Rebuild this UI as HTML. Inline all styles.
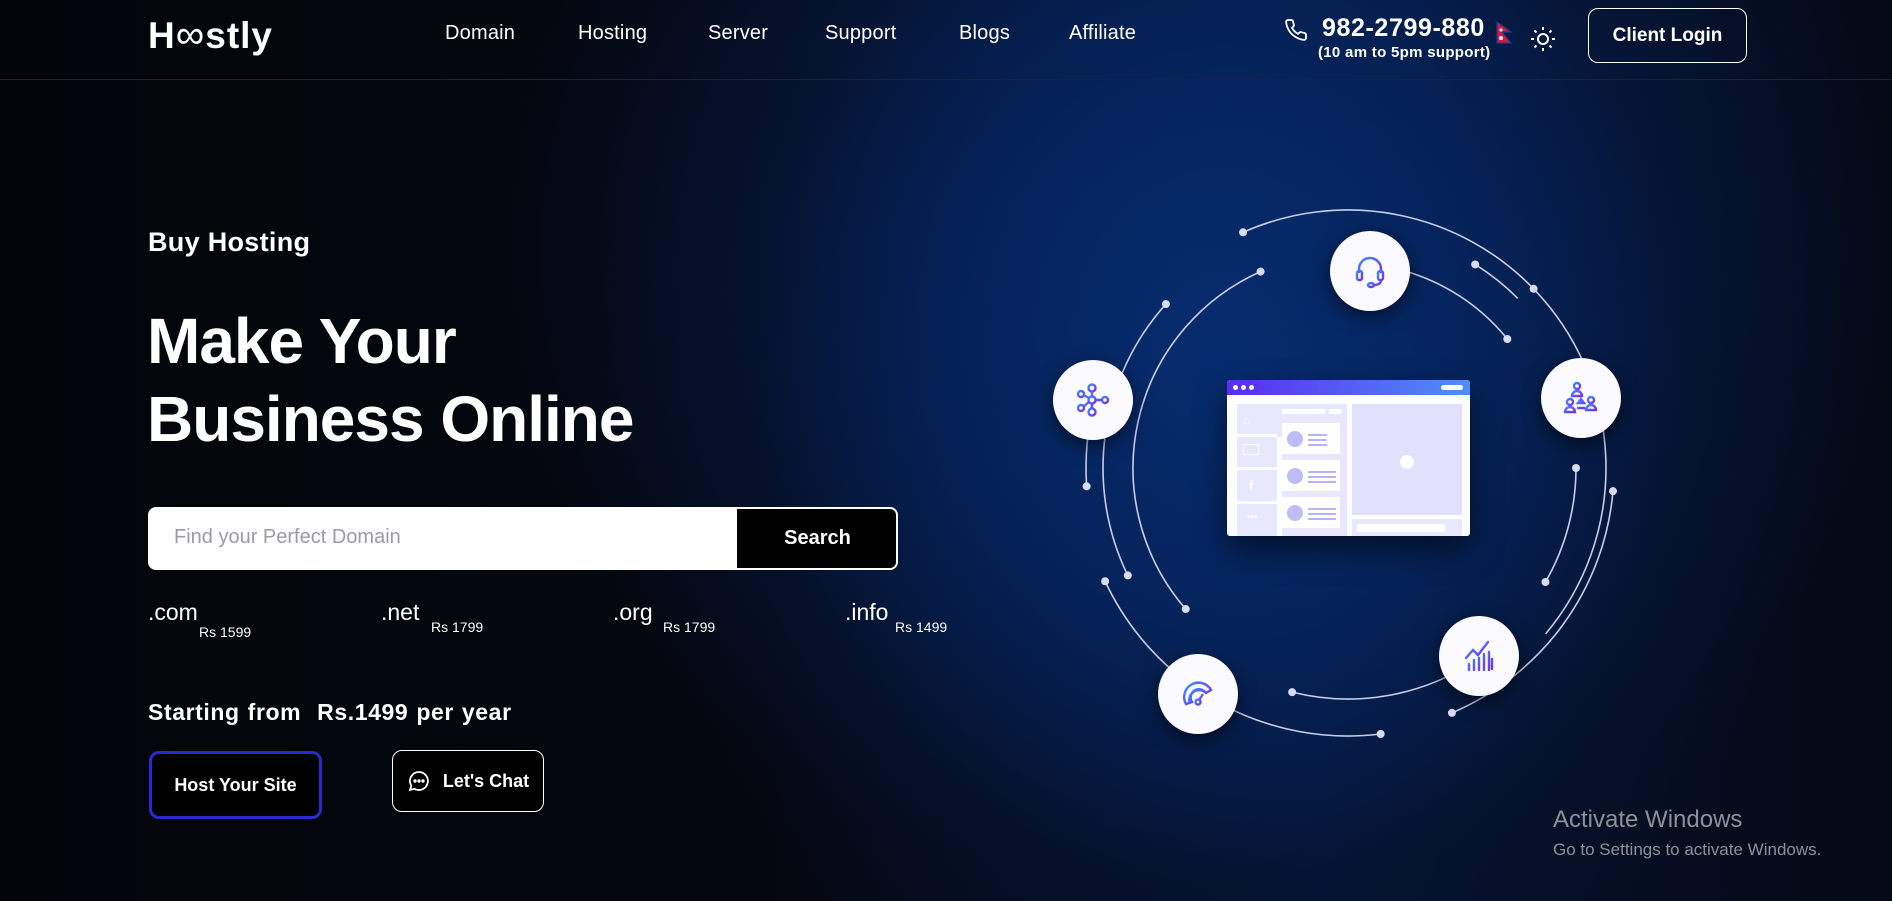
<!DOCTYPE html>
<html><head><meta charset="utf-8">
<style>
*{margin:0;padding:0;box-sizing:border-box}
html,body{width:1892px;height:901px;overflow:hidden}
body{font-family:"Liberation Sans",sans-serif;color:#fff;position:relative;
background:
radial-gradient(ellipse 620px 700px at 1220px 360px, rgba(6,44,112,0.95) 0%, rgba(5,38,98,0.75) 40%, rgba(4,22,58,0.35) 75%, rgba(3,6,14,0) 100%),
radial-gradient(ellipse 900px 800px at 1200px 250px, rgba(6,38,100,0.8) 0%, rgba(3,10,25,0) 80%),
linear-gradient(90deg,#04050b 0%,#05070f 40%,#061331 70%,#040914 100%);}
.abs{position:absolute}
.nav a{position:absolute;top:22px;font-size:20px;color:#fff;text-decoration:none;letter-spacing:0.2px}
.hline{position:absolute;left:0;top:79px;width:1892px;height:1px;background:#1c2333}
.logo{left:148px;top:13px;font-size:37px;font-weight:bold;letter-spacing:1px}
.btn{position:absolute;border-radius:10px;display:flex;align-items:center;justify-content:center;font-weight:bold;font-size:18px}
.circ{position:absolute;width:80px;height:80px;border-radius:50%;background:#fbfbff;box-shadow:0 6px 18px rgba(0,0,0,.55);display:flex;align-items:center;justify-content:center}
.tld{position:absolute;font-size:23px}
.pr{position:absolute;font-size:14px}
</style></head><body>
<div class="hline"></div>
<div class="abs logo">H<span style="font-weight:normal;font-size:40px">∞</span>stly</div>
<div class="nav">
<a style="left:445px">Domain</a><a style="left:578px">Hosting</a><a style="left:708px">Server</a><a style="left:825px">Support</a><a style="left:959px">Blogs</a><a style="left:1069px">Affiliate</a>
</div>
<svg class="abs" style="left:1284px;top:17px" width="24" height="26" viewBox="0 0 24 24" fill="none" stroke="#fff" stroke-width="1.8"><path d="M22 16.9v3a2 2 0 0 1-2.2 2 19.8 19.8 0 0 1-8.6-3.1 19.5 19.5 0 0 1-6-6A19.8 19.8 0 0 1 2.1 4.2 2 2 0 0 1 4.1 2h3a2 2 0 0 1 2 1.7c.1 1 .4 1.9.7 2.8a2 2 0 0 1-.5 2.1L8 9.9a16 16 0 0 0 6 6l1.3-1.3a2 2 0 0 1 2.1-.4c.9.3 1.8.6 2.8.7a2 2 0 0 1 1.7 2z"/></svg>
<div class="abs" style="left:1322px;top:14px;font-size:25px;font-weight:bold;letter-spacing:0.6px">982-2799-880</div>
<div class="abs" style="left:1318px;top:44px;font-size:15px;font-weight:bold;letter-spacing:0.3px">(10 am to 5pm support)</div>
<svg class="abs" style="left:1496px;top:21px" width="17" height="24" viewBox="0 0 17 24"><path d="M1 1 L15 11 H6 L15 22 H1Z" fill="#dc143c" stroke="#1d3c8f" stroke-width="1.2"/><circle cx="5" cy="9" r="1.5" fill="#fff"/><circle cx="5" cy="17" r="2" fill="#fff"/></svg>
<svg class="abs" style="left:1530px;top:26px" width="26" height="26" viewBox="0 0 26 26" fill="none" stroke="#fff" stroke-width="2"><circle cx="13" cy="13" r="5"/><path d="M13 1v3M13 22v3M1 13h3M22 13h3M4.5 4.5l2 2M19.5 19.5l2 2M4.5 21.5l2-2M19.5 6.5l2-2"/></svg>
<div class="btn" style="left:1588px;top:8px;width:159px;height:55px;border:1px solid #fff;font-size:19px">Client Login</div>

<div class="abs" style="left:148px;top:227px;font-size:27px;font-weight:bold;letter-spacing:0.3px">Buy Hosting</div>
<div class="abs" style="left:147px;top:302px;font-size:64px;font-weight:bold;line-height:78px;letter-spacing:-1px">Make Your<br>Business Online</div>

<div class="abs" style="left:148px;top:507px;width:750px;height:63px;background:#fff;border-radius:8px;border:2px solid #fff;overflow:hidden">
<div class="abs" style="left:24px;top:17px;font-size:20px;color:#9a9aa6">Find your Perfect Domain</div>
<div class="abs" style="left:587px;top:0;width:161px;height:59px;background:#000;border-radius:0 6px 6px 0;display:flex;align-items:center;justify-content:center;font-size:20px;font-weight:bold;color:#fff">Search</div>
</div>

<div class="tld" style="left:148px;top:599px">.com</div><div class="pr" style="left:199px;top:624px">Rs 1599</div>
<div class="tld" style="left:381px;top:599px">.net</div><div class="pr" style="left:431px;top:619px">Rs 1799</div>
<div class="tld" style="left:613px;top:599px">.org</div><div class="pr" style="left:663px;top:619px">Rs 1799</div>
<div class="tld" style="left:845px;top:599px">.info</div><div class="pr" style="left:895px;top:619px">Rs 1499</div>

<div class="abs" style="left:148px;top:699px;font-size:23px;font-weight:bold;letter-spacing:0.6px;word-spacing:1px">Starting from&nbsp;&nbsp;Rs.1499 per year</div>
<div class="btn" style="left:149px;top:751px;width:173px;height:68px;border:3px solid #2a2ad0;background:#000">Host Your Site</div>
<div class="btn" style="left:392px;top:750px;width:152px;height:62px;border:1px solid #fff;background:#000">
<svg width="24" height="24" viewBox="0 0 24 24" fill="none" stroke="#fff" stroke-width="1.8" style="margin-right:12px"><path d="M12 3a9 9 0 0 0-7.7 13.7L3 21l4.4-1.2A9 9 0 1 0 12 3z"/><circle cx="8" cy="12" r=".8" fill="#fff"/><circle cx="12" cy="12" r=".8" fill="#fff"/><circle cx="16" cy="12" r=".8" fill="#fff"/></svg>Let's Chat</div>

<svg id="rings" class="abs" style="left:0;top:0" width="1892" height="901"></svg>

<div class="abs" style="left:1227px;top:380px;width:243px;height:156px;background:#fff;border-radius:3px;overflow:hidden;box-shadow:0 14px 30px rgba(0,0,0,.55)">
<div class="abs" style="left:0;top:0;width:243px;height:15px;background:linear-gradient(90deg,#5a2cf2,#4f8ff7)"></div>
<div class="abs" style="left:6px;top:5px;width:5px;height:5px;border-radius:50%;background:#fff"></div>
<div class="abs" style="left:14px;top:5px;width:5px;height:5px;border-radius:50%;background:#fff"></div>
<div class="abs" style="left:22px;top:5px;width:5px;height:5px;border-radius:50%;background:#fff"></div>
<div class="abs" style="left:214px;top:5px;width:22px;height:5px;border-radius:3px;background:#fff"></div>
<div class="abs" style="left:10px;top:24px;width:110px;height:132px;background:#e8e7fd"></div>
<div class="abs" style="left:10px;top:54px;width:40px;height:3px;background:#fff"></div>
<div class="abs" style="left:50px;top:57px;width:5px;height:99px;background:#fff"></div>
<div class="abs" style="left:10px;top:87px;width:40px;height:3px;background:#fff"></div>
<div class="abs" style="left:10px;top:121px;width:40px;height:3px;background:#fff"></div>
<div class="abs" style="left:55px;top:29px;width:43px;height:5px;background:#fff"></div>
<div class="abs" style="left:102px;top:29px;width:12px;height:5px;background:#fff"></div>
<div class="abs" style="left:55px;top:43px;width:58px;height:31px;background:#fff"></div>
<div class="abs" style="left:55px;top:80px;width:58px;height:31px;background:#fff"></div>
<div class="abs" style="left:55px;top:117px;width:58px;height:31px;background:#fff"></div>
<div class="abs" style="left:60px;top:51px;width:16px;height:16px;border-radius:50%;background:#bdbcf7"></div>
<div class="abs" style="left:60px;top:88px;width:16px;height:16px;border-radius:50%;background:#bdbcf7"></div>
<div class="abs" style="left:60px;top:125px;width:16px;height:16px;border-radius:50%;background:#bdbcf7"></div>
<div class="abs" style="left:81px;top:54px;width:19px;height:2px;background:#b6b4f6;box-shadow:0 5px 0 #b6b4f6,0 10px 0 #b6b4f6"></div>
<div class="abs" style="left:81px;top:91px;width:28px;height:2px;background:#b6b4f6;box-shadow:0 5px 0 #b6b4f6,0 10px 0 #b6b4f6"></div>
<div class="abs" style="left:81px;top:128px;width:28px;height:2px;background:#b6b4f6;box-shadow:0 5px 0 #b6b4f6,0 10px 0 #b6b4f6"></div>
<div class="abs" style="left:125px;top:24px;width:110px;height:111px;background:#e2e1fd"></div>
<div class="abs" style="left:173px;top:75px;width:14px;height:14px;border-radius:50%;background:#fff"></div>
<div class="abs" style="left:125px;top:139px;width:110px;height:17px;background:#e8e7fd"></div>
<div class="abs" style="left:130px;top:144px;width:88px;height:8px;background:#fff"></div>
<div class="abs" style="left:16px;top:33px;font-size:13px;color:#fff">◌</div>
<div class="abs" style="left:22px;top:98px;font-size:13px;color:#fff;font-weight:bold">f</div>
<div class="abs" style="left:16px;top:64px;width:16px;height:11px;border:1.5px solid #fff"></div>
<div class="abs" style="left:20px;top:132px;font-size:10px;color:#fff">•••</div>
</div>

<svg width="0" height="0" style="position:absolute"><defs><linearGradient id="g" x1="0" y1="0" x2="1" y2="1"><stop offset="0" stop-color="#3b8cf7"/><stop offset="1" stop-color="#7a2cf0"/></linearGradient></defs></svg>
<div class="circ" style="left:1330px;top:231px"><svg width="40" height="40" viewBox="0 0 40 40" fill="none" stroke="url(#g)" stroke-width="2.4"><path d="M9 22v-4a11 11 0 0 1 22 0v4"/><rect x="7" y="20" width="5" height="9" rx="2"/><rect x="28" y="20" width="5" height="9" rx="2"/><path d="M31 29c0 4-4 5-8 5"/><ellipse cx="21" cy="34" rx="3" ry="2"/></svg></div>
<div class="circ" style="left:1053px;top:360px"><svg width="40" height="40" viewBox="0 0 40 40" fill="none" stroke="url(#g)" stroke-width="2.4"><circle cx="19" cy="20" r="3.5"/><circle cx="19" cy="8" r="3.5"/><circle cx="32" cy="20" r="3"/><circle cx="19" cy="32" r="3.5"/><circle cx="8" cy="14" r="3"/><circle cx="8" cy="28" r="3"/><path d="M19 11.5v5M22.5 20H29M19 23.5v5M16 18l-5.5-3M16 22l-5.5 4.5"/></svg></div>
<div class="circ" style="left:1541px;top:358px"><svg width="42" height="42" viewBox="0 0 42 42" fill="none" stroke="url(#g)" stroke-width="2.4"><circle cx="17" cy="9" r="3"/><path d="M12 19a5 5 0 0 1 10 0z"/><circle cx="10" cy="25" r="3"/><path d="M5 35a5 5 0 0 1 10 0z"/><circle cx="31" cy="23" r="3"/><path d="M26 33a5 5 0 0 1 10 0z"/><path d="M18 26l3-4 3 4zM17 31h8"/></svg></div>
<div class="circ" style="left:1439px;top:616px"><svg width="40" height="40" viewBox="0 0 40 40" fill="none" stroke="url(#g)" stroke-width="2.4" stroke-linecap="round"><path d="M7 22l7-8 5 5 10-13"/><path d="M10 34v-6M15 34v-10M20 34v-12M25 34v-16M30 34v-18M33 33v-10"/></svg></div>
<div class="circ" style="left:1158px;top:654px"><svg width="42" height="42" viewBox="0 0 42 42" fill="none" stroke="url(#g)" stroke-width="2.4"><path d="M9 31a14 14 0 0 1 25-14l-5 3a8 8 0 0 0-14 9z"/><path d="M13 31a10 10 0 0 1 15-12"/><circle cx="21" cy="29" r="2.5"/><path d="M22 27l4-6"/></svg></div>

<div class="abs" style="left:1553px;top:806px;font-size:24px;color:#8d9099">Activate Windows</div>
<div class="abs" style="left:1553px;top:840px;font-size:17px;color:#8d9099">Go to Settings to activate Windows.</div>

<script>
(function(){
var s=document.getElementById('rings'),cx=1348,cy=468,h='';
function P(r,a){a=a*Math.PI/180;return [cx+r*Math.cos(a),cy+r*Math.sin(a)];}
function arc(r,a1,a2,d1,d2){var p=P(r,a1),q=P(r,a2),lg=(a2-a1)>180?1:0;
h+='<path d="M'+p[0]+' '+p[1]+' A'+r+' '+r+' 0 '+lg+' 1 '+q[0]+' '+q[1]+'" fill="none" stroke="#c9cde6" stroke-width="1.6"/>';
if(d1)h+='<circle cx="'+p[0]+'" cy="'+p[1]+'" r="4" fill="#d9dcf5"/>';
if(d2)h+='<circle cx="'+q[0]+'" cy="'+q[1]+'" r="4" fill="#d9dcf5"/>';}
arc(258,-114,-44,1,1);
arc(258,-44,40,0,0);
arc(266,5,67,1,1);
arc(228,0,30,1,1);
arc(205,-80,-39,0,1);
arc(240,-58,-45,1,0);
arc(215,139,246,1,1);
arc(245,154,222,1,1);
arc(262,176,195,1,0);
arc(268,83,155,1,1);
arc(231,56,104,0,1);
s.innerHTML=h;})();
</script>
</body></html>
